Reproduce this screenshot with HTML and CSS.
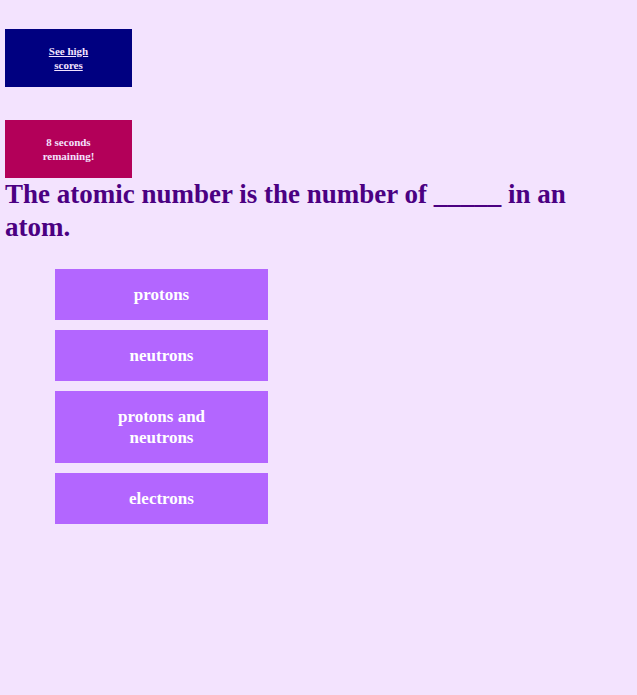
FILE: index.html
```html
<!DOCTYPE html>
<html>
<head>
<meta charset="utf-8">
<link rel="stylesheet" href="styles.css">
</head>
<body>
<main class="quiz">
  <div class="panel panel-scores"><a href="#" class="scores-link">See high scores</a></div>
  <div class="panel panel-timer">8 seconds remaining!</div>
  <h1 class="question">The atomic number is the number of _____ in an atom.</h1>
  <ul class="answers">
    <li><button class="answer">protons</button></li>
    <li><button class="answer">neutrons</button></li>
    <li><button class="answer">protons and neutrons</button></li>
    <li><button class="answer">electrons</button></li>
  </ul>
</main>
</body>
</html>
```
FILE: styles.css
```css
html, body {
  margin: 0;
  padding: 0;
  background: #f3e3fe;
}
body {
  font-family: "Liberation Serif", "DejaVu Serif", serif;
}
.quiz {
  padding: 29px 5px 0 5px;
}
.panel {
  width: 127px;
  height: 58px;
  box-sizing: border-box;
  padding: 0 30px;
  display: flex;
  align-items: center;
  justify-content: center;
  text-align: center;
  font-size: 11px;
  line-height: 14px;
  font-weight: bold;
  color: #f3e3fe;
}
.panel-scores {
  background: #000080;
}
.scores-link {
  color: #f3e3fe;
  text-decoration: underline;
}
.panel-timer {
  background: #b30059;
  margin-top: 33px;
}
.question {
  margin: 0;
  font-size: 27px;
  line-height: 33px;
  font-weight: bold;
  color: #4b0082;
}
.answers {
  list-style: none;
  margin: 25px 0 0 0;
  padding: 0 0 0 50px;
  display: flex;
  flex-direction: column;
  gap: 10px;
}
.answer {
  width: 213px;
  min-height: 51px;
  border: none;
  background: #b366ff;
  color: #ffffff;
  font-family: inherit;
  font-size: 17px;
  line-height: 21px;
  font-weight: bold;
  padding: 15px 50px;
  display: block;
  text-align: center;
}
```
